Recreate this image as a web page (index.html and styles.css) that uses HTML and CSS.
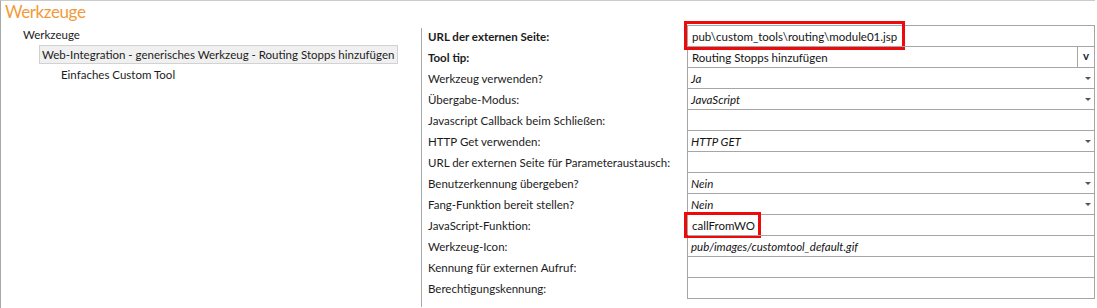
FILE: index.html
```html
<!DOCTYPE html>
<html lang="de">
<head>
<meta charset="utf-8">
<title>Werkzeuge</title>
<link rel="stylesheet" href="styles.css">
</head>
<body>
<div class="app">
  <div class="title">Werkzeuge</div>
  <div class="main">
    <div class="tree">
      <div class="node l1">Werkzeuge</div>
      <div class="node l2"><span class="selected">Web-Integration - generisches Werkzeug - Routing Stopps hinzufügen</span></div>
      <div class="node l3">Einfaches Custom Tool</div>
    </div>
    <div class="divider"></div>
    <div class="props">
      <div class="labels">
        <div class="label bold">URL der externen Seite:</div>
        <div class="label bold">Tool tip:</div>
        <div class="label">Werkzeug verwenden?</div>
        <div class="label">Übergabe-Modus:</div>
        <div class="label">Javascript Callback beim Schließen:</div>
        <div class="label">HTTP Get verwenden:</div>
        <div class="label">URL der externen Seite für Parameteraustausch:</div>
        <div class="label">Benutzerkennung übergeben?</div>
        <div class="label">Fang-Funktion bereit stellen?</div>
        <div class="label">JavaScript-Funktion:</div>
        <div class="label">Werkzeug-Icon:</div>
        <div class="label">Kennung für externen Aufruf:</div>
        <div class="label">Berechtigungskennung:</div>
      </div>
      <div class="values">
        <div class="cell"><span class="text">pub\custom_tools\routing\module01.jsp</span><span class="mark mark-url"></span></div>
        <div class="cell"><span class="text">Routing Stopps hinzufügen</span><span class="btn">v</span></div>
        <div class="cell"><span class="text italic">Ja</span><span class="arrow"></span></div>
        <div class="cell"><span class="text italic">JavaScript</span><span class="arrow"></span></div>
        <div class="cell"></div>
        <div class="cell"><span class="text italic">HTTP GET</span><span class="arrow"></span></div>
        <div class="cell"></div>
        <div class="cell"><span class="text italic">Nein</span><span class="arrow"></span></div>
        <div class="cell"><span class="text italic">Nein</span><span class="arrow"></span></div>
        <div class="cell"><span class="text">callFromWO</span><span class="mark mark-fn"></span></div>
        <div class="cell"><span class="text italic">pub/images/customtool_default.gif</span></div>
        <div class="cell"></div>
        <div class="cell"></div>
      </div>
    </div>
  </div>
</div>
</body>
</html>
```

FILE: styles.css
```css
html, body {
  margin: 0;
  padding: 0;
  background: #ffffff;
}
body {
  font-family: Lato, "Open Sans", sans-serif;
  font-size: 11.5px;
  color: #1c1c1c;
  overflow: hidden;
}
.app {
  width: 1094px;
  height: 307px;
  border-top: 1px solid #cbcbcb;
  border-left: 1px solid #a8a8a8;
  background: #fff;
}
.title {
  height: 24px;
  padding-left: 4px;
  font-size: 17px;
  letter-spacing: -0.4px;
  line-height: 22px;
  color: #f39a38;
}
.main {
  display: flex;
}
.tree {
  width: 420px;
}
.node {
  height: 20px;
  line-height: 20px;
  white-space: nowrap;
}
.l1 { padding-left: 22px; }
.l2 { padding-left: 38px; }
.l3 { padding-left: 60px; }
.selected {
  display: inline-block;
  box-sizing: border-box;
  height: 19px;
  line-height: 17px;
  padding: 0 3px 0 2px;
  background: #f0f0f0;
  border: 1px solid #d2d2d2;
}
.divider {
  width: 1px;
  height: 279px;
  margin-top: 3px;
  background: #a8a8a8;
}
.props {
  display: flex;
}
.labels {
  width: 259px;
  padding-left: 6px;
  padding-top: 1px;
}
.label {
  height: 21px;
  line-height: 21px;
  white-space: nowrap;
}
.bold { font-weight: bold; }
.values {
  width: 406px;
  border: 1px solid #a6a6a6;
  align-self: flex-start;
}
.cell {
  position: relative;
  display: flex;
  align-items: center;
  height: 20px;
  border-top: 1px solid #a6a6a6;
}
.cell:first-child { border-top: none; }
.text {
  flex: 1;
  padding-left: 4px;
  white-space: nowrap;
  color: #141414;
}
.italic {
  font-style: italic;
  padding-left: 3px;
}
.arrow {
  width: 0;
  height: 0;
  margin-right: 3px;
  border-left: 3px solid transparent;
  border-right: 3px solid transparent;
  border-top: 3px solid #555;
}
.btn {
  align-self: stretch;
  width: 16px;
  border-left: 1px solid #a6a6a6;
  text-align: center;
  font-weight: bold;
  line-height: 18px;
  color: #1a1f3a;
}
.mark {
  position: absolute;
  box-sizing: border-box;
  border: 3px solid #ee0a0a;
}
.mark-url {
  left: -4px;
  top: -5px;
  width: 221px;
  height: 29px;
}
.mark-fn {
  left: -4px;
  top: -3px;
  width: 77px;
  height: 26px;
}
```
